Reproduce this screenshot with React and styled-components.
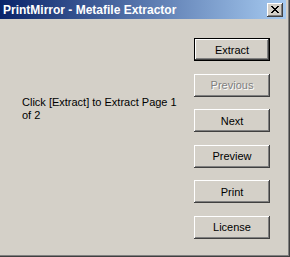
import React from "react";
import styled, { createGlobalStyle } from "styled-components";

const Global = createGlobalStyle`
    html, body {
        margin: 0;
        padding: 0;
        background: #d4d0c8;
    }
`

const Window = styled.div`
    width: 290px;
    height: 257px;
    box-sizing: border-box;
    background: #d4d0c8;
    border-right: 1px solid #404040;
    border-bottom: 1px solid #404040;
    box-shadow: inset -1px -1px 0 #808080;
    padding: 0 3px 3px 0;
    display: flex;
    flex-direction: column;
    font-family: "Liberation Sans", Arial, sans-serif;
`

const TitleBar = styled.div`
    height: 19px;
    flex-shrink: 0;
    display: flex;
    align-items: center;
    justify-content: space-between;
    padding: 0 3px 0 3px;
    background: linear-gradient(to right, #0a246a, #a6caf0);

    span {
        color: #fff;
        font-weight: bold;
        font-size: 12px;
        white-space: nowrap;
    }
`

const CloseButton = styled.div`
    width: 16px;
    height: 14px;
    box-sizing: border-box;
    background: #d4d0c8;
    display: flex;
    align-items: center;
    justify-content: center;
    box-shadow: inset -1px -1px 0 #404040, inset 1px 1px 0 #fff,
        inset -2px -2px 0 #808080;
`

const Body = styled.div`
    flex: 1;
    display: flex;
    justify-content: space-between;
    padding: 19px 16px 0 22px;
`

const Message = styled.p`
    margin: 0;
    padding-top: 58px;
    width: 160px;
    font-size: 11px;
    line-height: 13px;
    color: #000;
`

const Buttons = styled.div`
    display: flex;
    flex-direction: column;
    gap: 12.6px;
`

const Button = styled.button`
    width: 76px;
    height: 23px;
    box-sizing: border-box;
    margin: 0;
    padding: 0;
    border: none;
    background: #d4d0c8;
    font-family: "Liberation Sans", Arial, sans-serif;
    font-size: 11px;
    color: ${p => (p.disabled ? "#808080" : "#000")};
    text-shadow: ${p => (p.disabled ? "1px 1px 0 #fff" : "none")};
    box-shadow: ${p =>
        p.$default
            ? "inset 0 0 0 1px #000, inset -2px -2px 0 #404040, inset 2px 2px 0 #fff, inset -3px -3px 0 #808080"
            : "inset -1px -1px 0 #404040, inset 1px 1px 0 #fff, inset -2px -2px 0 #808080"};
`

const App = () => {
    return (
        <>
            <Global />
            <Window>
                <TitleBar>
                    <span>PrintMirror - Metafile Extractor</span>
                    <CloseButton>
                        <svg width="8" height="7" viewBox="0 0 8 7">
                            <path d="M0 0h2v1h1v1h2v-1h1v-1h2v1h-1v1h-1v1h-1v1h1v1h1v1h1v1h-2v-1h-1v-1h-2v1h-1v1h-2v-1h1v-1h1v-1h1v-1h-1v-1h-1v-1h-1z" fill="#000" />
                        </svg>
                    </CloseButton>
                </TitleBar>
                <Body>
                    <Message>Click [Extract] to Extract Page 1 of 2</Message>
                    <Buttons>
                        <Button $default>Extract</Button>
                        <Button disabled>Previous</Button>
                        <Button>Next</Button>
                        <Button>Preview</Button>
                        <Button>Print</Button>
                        <Button>License</Button>
                    </Buttons>
                </Body>
            </Window>
        </>
    )
}

export default App;
